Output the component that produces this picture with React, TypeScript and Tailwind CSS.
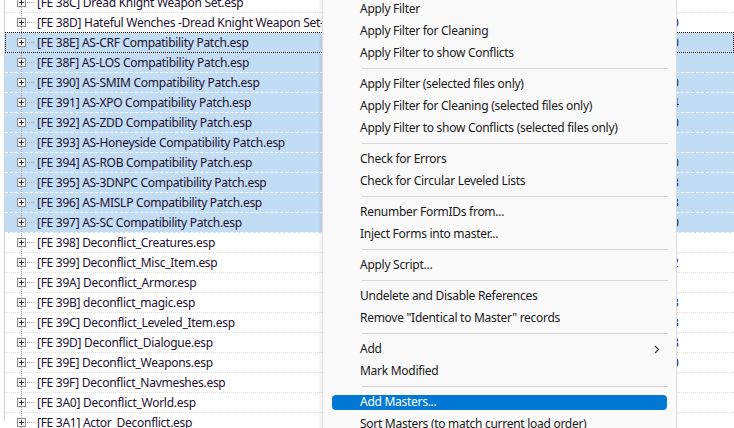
import React from "react";

type Row = { id: string; name: string; sel?: boolean; focus?: boolean; frag: string };

const rows: Row[] = [
  { id: "38C", name: "Dread Knight Weapon Set.esp", frag: "1" },
  { id: "38D", name: "Hateful Wenches -Dread Knight Weapon Set-.esp", frag: "0" },
  { id: "38E", name: "AS-CRF Compatibility Patch.esp", sel: true, focus: true, frag: "0" },
  { id: "38F", name: "AS-LOS Compatibility Patch.esp", sel: true, frag: "1" },
  { id: "390", name: "AS-SMIM Compatibility Patch.esp", sel: true, frag: "0" },
  { id: "391", name: "AS-XPO Compatibility Patch.esp", sel: true, frag: "4" },
  { id: "392", name: "AS-ZDD Compatibility Patch.esp", sel: true, frag: "0" },
  { id: "393", name: "AS-Honeyside Compatibility Patch.esp", sel: true, frag: "1" },
  { id: "394", name: "AS-ROB Compatibility Patch.esp", sel: true, frag: "0" },
  { id: "395", name: "AS-3DNPC Compatibility Patch.esp", sel: true, frag: "3" },
  { id: "396", name: "AS-MISLP Compatibility Patch.esp", sel: true, frag: "3" },
  { id: "397", name: "AS-SC Compatibility Patch.esp", sel: true, frag: "0" },
  { id: "398", name: "Deconflict_Creatures.esp", frag: "1" },
  { id: "399", name: "Deconflict_Misc_Item.esp", frag: "2" },
  { id: "39A", name: "Deconflict_Armor.esp", frag: "1" },
  { id: "39B", name: "deconflict_magic.esp", frag: "3" },
  { id: "39C", name: "Deconflict_Leveled_Item.esp", frag: "3" },
  { id: "39D", name: "Deconflict_Dialogue.esp", frag: "8" },
  { id: "39E", name: "Deconflict_Weapons.esp", frag: "0" },
  { id: "39F", name: "Deconflict_Navmeshes.esp", frag: "1" },
  { id: "3A0", name: "Deconflict_World.esp", frag: "1" },
  { id: "3A1", name: "Actor_Deconflict.esp", frag: "1" },
];

type MenuEntry = { label?: string; sep?: boolean; sub?: boolean; hl?: boolean };

const menu: MenuEntry[] = [
  { label: "Apply Filter" },
  { label: "Apply Filter for Cleaning" },
  { label: "Apply Filter to show Conflicts" },
  { sep: true },
  { label: "Apply Filter (selected files only)" },
  { label: "Apply Filter for Cleaning (selected files only)" },
  { label: "Apply Filter to show Conflicts (selected files only)" },
  { sep: true },
  { label: "Check for Errors" },
  { label: "Check for Circular Leveled Lists" },
  { sep: true },
  { label: "Renumber FormIDs from..." },
  { label: "Inject Forms into master..." },
  { sep: true },
  { label: "Apply Script..." },
  { sep: true },
  { label: "Undelete and Disable References" },
  { label: 'Remove "Identical to Master" records' },
  { sep: true },
  { label: "Add", sub: true },
  { label: "Mark Modified" },
  { sep: true },
  { label: "Add Masters...", hl: true },
  { label: "Sort Masters (to match current load order)" },
];

function TreeGlyph() {
  return (
    <svg width="32" height="19" viewBox="0 0 32 19" className="shrink-0">
      <line x1="16.5" y1="0" x2="16.5" y2="19" stroke="#a0a0a0" strokeDasharray="1 1" />
      <line x1="22" y1="9.5" x2="30" y2="9.5" stroke="#a0a0a0" strokeDasharray="1 1" />
      <rect x="12.5" y="5.5" width="8" height="8" fill="#f4f4f4" stroke="#8e8e8e" />
      <line x1="14" y1="9.5" x2="19" y2="9.5" stroke="#303030" />
      <line x1="16.5" y1="7" x2="16.5" y2="12" stroke="#303030" />
    </svg>
  );
}

const FONT = '"Noto Sans", "Open Sans", sans-serif';

export default function App() {
  return (
    <div
      className="relative w-[734px] h-[428px] overflow-hidden bg-white"
      style={{ fontFamily: FONT }}
    >
      <div className="ml-[4px] h-full border-l border-[#d4d4d4]">
        <div className="mt-[-7px] flex flex-col">
          {rows.map((r) => (
            <div
              key={r.id}
              className={`relative flex h-[20px] items-center whitespace-nowrap border-b text-[12px] tracking-[-0.28px] text-[#1c1030] ${
                r.sel
                  ? "bg-[#c2dcf3] border-dashed border-white"
                  : "border-dotted border-[#dedede]"
              }`}
            >
              <TreeGlyph />
              <span className="w-[640px] shrink-0 overflow-hidden">
                [FE {r.id}] {r.name}
              </span>
              <span className="w-[2px] shrink-0 overflow-hidden text-[#1a1a50]">
                <span className="ml-[-5px] inline-block">{r.frag}</span>
              </span>
              {r.focus && (
                <div className="absolute inset-x-0 top-[-1px] bottom-[-1px] border border-dotted border-black" />
              )}
            </div>
          ))}
        </div>
      </div>

      <div
        className="absolute left-[322px] top-[-6px] w-[355px] h-[450px] bg-[#f9f9f9] border-l border-r border-[#dcdcdc] pt-[4px] text-[12px] tracking-[-0.28px] text-[#1a1a1a] shadow-[-2px_0_4px_rgba(0,0,0,0.08)]"
        style={{ fontFamily: FONT }}
      >
        {menu.map((m, i) =>
          m.sep ? (
            <div key={i} className="flex h-[9px] items-center pl-[39px] pr-[8px]">
              <div className="h-px w-full bg-[#d6d6d6]" />
            </div>
          ) : m.hl ? (
            <div key={i} className="flex h-[22px] items-center px-[9px]">
              <div className="flex h-[15px] w-full items-center rounded-[4px] bg-[#0078d4] pl-[28px] text-white">
                {m.label}
              </div>
            </div>
          ) : (
            <div key={i} className="relative flex h-[22px] items-center pl-[37px] pr-[16px]">
              <span className="flex-1">{m.label}</span>
              {m.sub && (
                <svg width="6" height="9" viewBox="0 0 6 9">
                  <path d="M1 1 L4.5 4.5 L1 8" fill="none" stroke="#333" strokeWidth="1.2" />
                </svg>
              )}
            </div>
          )
        )}
      </div>
    </div>
  );
}
